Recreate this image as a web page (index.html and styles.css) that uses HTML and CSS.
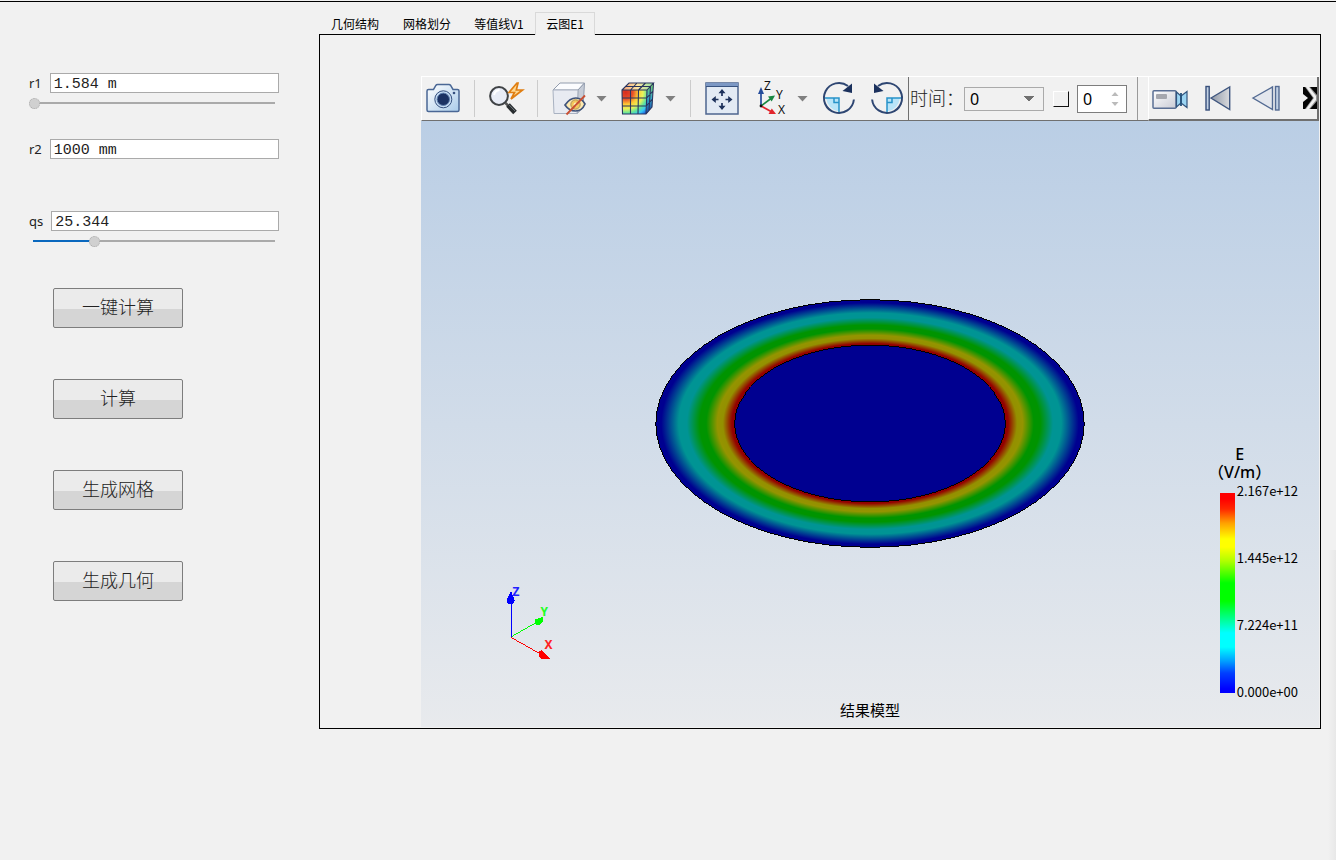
FILE: index.html
```html
<!DOCTYPE html>
<html lang="zh-CN">
<head>
<meta charset="utf-8">
<title>结果模型</title>
<link rel="stylesheet" href="styles.css">
</head>
<body>
<main class="app">
  <section class="params">
    <div class="fields">
      <div class="field">
        <div class="field-row"><label for="r1">r1</label><input class="text-box" id="r1" type="text" value="1.584 m"></div>
        <input class="slider" type="range" min="0" max="100" value="0" aria-label="r1">
      </div>
      <div class="field">
        <div class="field-row"><label for="r2">r2</label><input class="text-box" id="r2" type="text" value="1000 mm"></div>
      </div>
      <div class="field">
        <div class="field-row"><label for="qs">qs</label><input class="text-box" id="qs" type="text" value="25.344"></div>
        <input class="slider slider-filled" type="range" min="0" max="100" value="25" aria-label="qs">
      </div>
    </div>
    <div class="actions">
      <button class="push" type="button">一键计算</button>
      <button class="push" type="button">计算</button>
      <button class="push" type="button">生成网格</button>
      <button class="push" type="button">生成几何</button>
    </div>
  </section>

  <section class="results">
    <div class="tabs" role="tablist">
      <button class="tab" type="button" role="tab">几何结构</button>
      <button class="tab" type="button" role="tab">网格划分</button>
      <button class="tab" type="button" role="tab">等值线V1</button>
      <button class="tab tab-active" type="button" role="tab" aria-selected="true">云图E1</button>
    </div>
    <div class="panel">
      <div class="viewer">
        <div class="toolbars">
          <div class="bar bar-view">
            <button class="tool" type="button" aria-label="截图">
              <svg class="icon" viewBox="0 0 34 34">
                <defs><linearGradient id="cam" x2="1" y2="1"><stop offset="0" stop-color="#fff"/><stop offset="1" stop-color="#a9cbea"/></linearGradient></defs>
                <path d="M2.5 7.5H7.5L10 3.2Q10.5 2.5 11.5 2.5H23Q24 2.5 24.5 3.2L27 7.5H31.5Q33 7.5 33 9V28Q33 29.5 31.5 29.5H2.5Q1 29.5 1 28V9Q1 7.5 2.5 7.5Z" fill="url(#cam)" stroke="#4a6795" stroke-width="1.5"/>
                <circle cx="17.3" cy="17.3" r="8.5" fill="#c5dcf3" stroke="#35507f" stroke-width="1"/>
                <circle cx="17.3" cy="17.3" r="6.2" fill="#1b3263" stroke="#5f7fae" stroke-width="1"/>
                <circle cx="28" cy="11" r="1.3" fill="#35507f"/>
              </svg>
            </button>
            <span class="sep"></span>
            <button class="tool" type="button" aria-label="快速缩放">
              <svg class="icon" viewBox="0 0 34 34">
                <path d="M16.5 21L19 23.5" stroke="#555" stroke-width="2.5"/>
                <path d="M19 23L26 30.500" stroke="#292d30" stroke-width="5"/>
                <path d="M20.2 23L26 29" stroke="#71797f" stroke-width="1"/>
                <circle cx="10" cy="14" r="8.9" fill="#e8ecf6" stroke="#3f4245" stroke-width="2"/>
                <path d="M5 13Q6 8.5 10.5 8" fill="none" stroke="#fff" stroke-width="2"/>
                <path d="M28 1L20 10.5L25.5 10.5L22 17L33.5 8H27.3L29 1Z" fill="#ffd890" stroke="#e07e12" stroke-width="1.7"/>
              </svg>
            </button>
            <span class="sep"></span>
            <button class="tool" type="button" aria-label="隐藏">
              <svg class="icon" viewBox="0 0 34 34">
                <path d="M1 8L8 1H32.5L26 8Z" fill="#fbfcfe" stroke="#929cad"/>
                <path d="M26 8L32.5 1L31 26L25 31.5Z" fill="#c6ccd7" stroke="#929cad"/>
                <path d="M1 8H26L25 31.5H2Z" fill="#e8ebf2" stroke="#a9b2c1"/>
                <path d="M13 23Q18 15.8 24 16T33 22Q30 29 23.5 29T13 23Z" fill="#ffeab0" stroke="#40547c" stroke-width="1.7"/>
                <circle cx="23.5" cy="22.5" r="4.7" fill="#f3c75b" stroke="#a9905b"/>
                <circle cx="23.5" cy="22.5" r="1.9" fill="#fff0be"/>
                <path d="M14.5 32.5L33 13.5" stroke="#c94f32" stroke-width="1.8"/>
              </svg>
            </button>
            <button class="drop" type="button" aria-label="隐藏选项"></button>
            <button class="tool" type="button" aria-label="云图显示">
              <svg class="icon" viewBox="0 0 34 34">
                <defs>
                  <radialGradient id="heat" cx="0.15" cy="0.1" r="1.15"><stop offset="0" stop-color="#d92b20"/><stop offset="0.25" stop-color="#e8502a"/><stop offset="0.43" stop-color="#ffc934"/><stop offset="0.6" stop-color="#e9f35b"/><stop offset="0.75" stop-color="#61e39c"/><stop offset="0.88" stop-color="#36c9f6"/><stop offset="1" stop-color="#2169e0"/></radialGradient>
                  <linearGradient id="heatTop" x2="1"><stop offset="0" stop-color="#f4a078"/><stop offset="0.5" stop-color="#ffe6a0"/><stop offset="1" stop-color="#8de0a0"/></linearGradient>
                  <linearGradient id="heatSide" x2="0" y2="1"><stop offset="0" stop-color="#7fd968"/><stop offset="0.5" stop-color="#35a5c7"/><stop offset="1" stop-color="#173da3"/></linearGradient>
                </defs>
                <path d="M1 8L8 1H32.5L26 8Z" fill="url(#heatTop)"/>
                <path d="M26 8L32.5 1L31 25L25 32Z" fill="url(#heatSide)"/>
                <path d="M1 8H26L25 32H1.5Z" fill="url(#heat)"/>
                <path d="M1 8L8 1H32.5L26 8H1L1.5 32H25L31 25L32.5 1M26 8L25 32M9.5 8V32M17.5 8L17 32M1 16H25.7L32 9M1.5 24H25.3L31.5 17M9.5 8L16 1M17.5 8L24.5 1M4.5 4.5H29.5L28 28.5" fill="none" stroke="#29345e" stroke-width="1.1"/>
              </svg>
            </button>
            <button class="drop" type="button" aria-label="云图选项"></button>
            <span class="sep"></span>
            <button class="tool" type="button" aria-label="适应窗口">
              <svg class="icon" viewBox="0 0 34 34">
                <rect x="1" y="1" width="32" height="31" fill="#e2eaf4" stroke="#4e658f" stroke-width="1.5"/>
                <path d="M1 2.5H33" stroke="#7c98c4" stroke-width="3"/><path d="M1 4.5H33" stroke="#385380"/>
                <path d="M17 14V10M17 21V25M13.5 17.5H9.5M20.5 17.5H24.5" stroke="#1d315b" stroke-width="1.7"/>
                <path d="M17 7L20.5 11.3H13.5ZM17 28L20.5 23.7H13.5ZM6.5 17.5L10.8 14V21ZM27.5 17.5L23.2 14V21Z" fill="#1d315b"/>
              </svg>
            </button>
            <button class="tool" type="button" aria-label="视角">
              <svg class="icon" viewBox="0 0 34 34">
                <path d="M8 24V9" stroke="#244b9b" stroke-width="1.7"/><path d="M8 5L11 12H5Z" fill="#244b9b"/>
                <path d="M8 24L18 16.5" stroke="#188740" stroke-width="1.7"/><path d="M22 13.5L18.7 19.5L15 14.5Z" fill="#188740"/>
                <path d="M8 24L18 29.5" stroke="#e2252c" stroke-width="1.7"/><path d="M23 32H15.5L18.8 26.5Z" fill="#e2252c"/>
                <circle cx="8" cy="24" r="1.4" fill="#111"/>
                <text class="axis-letter" x="11" y="8">Z</text><text class="axis-letter" x="23" y="17">Y</text><text class="axis-letter" x="25" y="32">X</text>
              </svg>
            </button>
            <button class="drop" type="button" aria-label="视角选项"></button>
            <button class="tool" type="button" aria-label="顺时针旋转">
              <svg class="icon" viewBox="0 0 34 34">
                <path d="M4 16H17V29.5Q6 28 4 16Z" fill="#b9e4f8"/><path d="M2 16H17V31" fill="none" stroke="#2793c9" stroke-width="1.5"/><path d="M12 16V20.5H17" fill="none" stroke="#2793c9" stroke-width="1.5"/>
                <path d="M31.9 17.5A15 15 0 1 1 26 4" fill="none" stroke="#2e4672" stroke-width="2"/>
                <path d="M30 1.5V11L20.500 9Z" fill="#1b315d"/>
              </svg>
            </button>
            <button class="tool" type="button" aria-label="逆时针旋转">
              <svg class="icon" viewBox="0 0 34 34">
                <path d="M30 16H17V29.5Q28 28 30 16Z" fill="#b9e4f8"/><path d="M32 16H17V31" fill="none" stroke="#2793c9" stroke-width="1.5"/><path d="M22 16V20.5H17" fill="none" stroke="#2793c9" stroke-width="1.5"/>
                <path d="M2.1 17.5A15 15 0 1 0 8 4" fill="none" stroke="#2e4672" stroke-width="2"/>
                <path d="M4 1.5V11L13.500 9Z" fill="#1b315d"/>
              </svg>
            </button>
          </div>
          <div class="bar bar-time">
            <label class="time-label" for="time">时间：</label>
            <select class="time-select" id="time"><option>0</option></select>
            <input class="tick" type="checkbox" aria-label="启用帧">
            <div class="spin">
              <input class="spin-box" type="number" value="0" aria-label="帧">
              <svg class="spin-arrows" viewBox="0 0 8 16"><path d="M4 1L7.5 5H0.5ZM4 15L7.5 11H0.5Z" fill="#bbb"/></svg>
            </div>
          </div>
          <div class="bar bar-play">
            <button class="tool" type="button" aria-label="录像">
              <svg class="icon icon-wide" viewBox="0 0 36 34">
                <defs><linearGradient id="vid" x2="1" y2="1"><stop offset="0" stop-color="#fff"/><stop offset="1" stop-color="#c9cbd5"/></linearGradient></defs>
                <rect x="1" y="9.7" width="23" height="17.5" rx="1" fill="url(#vid)" stroke="#5a6f94" stroke-width="1.5"/>
                <rect x="4" y="13" width="11" height="5" rx="1" fill="#a5a7ae"/>
                <path d="M24.5 11L29 15V22L24.5 26ZM35 10.5L29 15V22L35 26.5Z" fill="#9cd5f3" stroke="#32547d" stroke-width="1.2"/>
                <path d="M29 12V25" stroke="#24517b" stroke-width="1.8"/>
              </svg>
            </button>
            <button class="tool" type="button" aria-label="第一帧">
              <svg class="icon" viewBox="0 0 34 34">
                <defs><linearGradient id="tri" x2="1"><stop offset="0" stop-color="#8f98a7"/><stop offset="1" stop-color="#d9dadd"/></linearGradient></defs>
                <rect x="5" y="5.5" width="3.2" height="23.5" fill="#c2d1e4" stroke="#374f7b" stroke-width="1.4"/>
                <path d="M10 17L28.7 6V28.5Z" fill="url(#tri)" stroke="#3f567f" stroke-width="1.4"/>
              </svg>
            </button>
            <button class="tool" type="button" aria-label="上一帧">
              <svg class="icon" viewBox="0 0 34 34">
                <path d="M5 17L24.5 6V28.5Z" fill="#e4e7ed" stroke="#536a92" stroke-width="1.4"/>
                <rect x="27.5" y="5.5" width="3.5" height="23.5" fill="#c2d1e4" stroke="#536a92" stroke-width="1.4"/>
              </svg>
            </button>
            <button class="tool tool-more" type="button" aria-label="更多">
              <svg class="icon icon-more" viewBox="0 0 14 22">
                <path d="M0 0H14V22H0Z" fill="#050505"/>
                <path d="M2 0H7L14 8V14L7 22H2L10 11Z" fill="#999"/>
                <path d="M0 7L5 11L0 15ZM3 0H6L13 9V13L6 22H3L11 11Z" fill="#f1f1f1"/>
              </svg>
            </button>
          </div>
        </div>

        <div class="scene">
          <svg class="plot" viewBox="0 0 898 607" role="img" aria-label="电场云图">
            <defs>
              <radialGradient id="field">
                <stop offset="0.632" stop-color="#900000"/><stop offset="0.645" stop-color="#940000"/>
                <stop offset="0.687" stop-color="#949000"/><stop offset="0.713" stop-color="#949400"/>
                <stop offset="0.765" stop-color="#009400"/><stop offset="0.795" stop-color="#009400"/>
                <stop offset="0.855" stop-color="#009494"/><stop offset="0.893" stop-color="#009494"/>
                <stop offset="0.975" stop-color="#000090"/><stop offset="1" stop-color="#000090"/>
              </radialGradient>
            </defs>
            <g shape-rendering="crispEdges" stroke="#000">
              <ellipse cx="449" cy="303" rx="214.5" ry="124" fill="url(#field)"/>
              <ellipse cx="449" cy="303" rx="135.5" ry="78.5" fill="#000090"/>
            </g>
            <g shape-rendering="crispEdges">
              <path d="M89 517L121 535" stroke="#f00"/><path d="M89 517L117 501" stroke="#0f0"/><rect x="89" y="481" width="1" height="36" fill="#00f"/>
              <path d="M88.5 472H90L93 480Q93 484 89 484T85 480Z" fill="#00f"/>
              <path d="M114 499L121 497V502L118 505H115L113 502Z" fill="#0f0"/>
              <path d="M120 530L129 539H120L117 536V532Z" fill="#f00"/>
            </g>
            <g class="triad"><text x="91" y="476" fill="#22f">Z</text><text x="119" y="496" fill="#2f2">Y</text><text x="123" y="529" fill="#f22">X</text></g>
          </svg>
          <div class="legend">
            <div class="legend-title"><span>E</span><span>（V/m）</span></div>
            <div class="legend-body">
              <div class="legend-scale"></div>
              <div class="legend-values"><span>2.167e+12</span><span>1.445e+12</span><span>7.224e+11</span><span>0.000e+00</span></div>
            </div>
          </div>
          <p class="caption">结果模型</p>
        </div>
      </div>
    </div>
  </section>
</main>
</body>
</html>
```

FILE: styles.css
```css
* { box-sizing: border-box; }

html { background: #f1f1f1; }

body {
  margin: 0;
  padding-top: 1px;
  color: #222;
  font-family: "Noto Sans", "Noto Sans CJK SC", sans-serif;
}

button, input, select { font: inherit; color: inherit; margin: 0; }

.app {
  display: flex;
  min-height: calc(100vh - 1px);
  padding: 0 15px 131px 0;
  border-top: 1px solid #000;
  background: linear-gradient(to right, #f1f1f1, #e8e8e8) right bottom / 8px 310px no-repeat;
}

/* Parameters */
.params { flex: 0 0 319px; padding: 71px 40px 0 29px; }

.fields { display: grid; grid-template-rows: 66px 72px 77px; }

.field-row {
  display: flex;
  align-items: center;
  gap: 8px;
  height: 20px;
  font-size: 13px;
}

.text-box {
  flex: 1;
  min-width: 0;
  height: 20px;
  padding: 3px 3px 0;
  border: 1px solid #aaa;
  background: #fff;
  font: 15px/15px "Liberation Mono", monospace;
}

.slider {
  appearance: none;
  display: block;
  width: 100%;
  height: 20px;
  background: linear-gradient(#aaa, #aaa) center / calc(100% - 8px) 2px no-repeat;
}

.slider-filled {
  background:
    linear-gradient(#0a68be, #0a68be) 4px center / 25% 2px no-repeat,
    linear-gradient(#aaa, #aaa) center / calc(100% - 8px) 2px no-repeat;
}

.slider::-webkit-slider-thumb {
  appearance: none;
  width: 11px;
  height: 11px;
  border: 1px dotted #aaa;
  border-radius: 50%;
  background: #d0d0d0;
}

.actions {
  display: flex;
  flex-direction: column;
  gap: 51px;
  padding-left: 24px;
}

.push {
  width: 130px;
  height: 40px;
  padding: 0 0 4px;
  border: 1px solid #7d7d7d;
  border-radius: 2px;
  background: linear-gradient(#ebebeb 0 52%, #d5d5d5 52%);
  font: 300 18px/34px "Noto Sans CJK SC", sans-serif;
}

/* Tabs */
.results {
  flex: 1;
  min-width: 0;
  display: flex;
  flex-direction: column;
  padding-top: 10px;
}

.tabs { display: flex; }

.tab {
  width: 72px;
  height: 23px;
  margin-bottom: -1px;
  padding: 0;
  border: 0;
  background: none;
  color: #000;
  font: 12px/22px "Noto Sans CJK SC", sans-serif;
}

.tab-active {
  position: relative;
  width: 60px;
  border: 1px solid #d9d9d9;
  border-bottom: 0;
  background: #f1f1f1;
}

.panel {
  flex: 1;
  display: flex;
  padding: 41px 1px 1px 101px;
  border: 1px solid #000;
}

.viewer { flex: 1; min-width: 0; display: flex; flex-direction: column; }

/* Toolbars */
.toolbars {
  display: flex;
  height: 45px;
  border-top: 1px solid #fff;
  border-bottom: 1px solid #707070;
  border-left: 1px solid #fff;
}

.bar { display: flex; align-items: center; }

.bar-view { gap: 14px; padding: 0 4px; }

.tool {
  flex: none;
  display: block;
  padding: 0;
  border: 0;
  background: none;
}

.icon { display: block; width: 34px; height: 34px; overflow: visible; }
.icon-wide { width: 36px; }
.icon-more { width: 14px; height: 22px; }

.axis-letter { font: 12px "Noto Sans", sans-serif; fill: #111; }

.sep { flex: none; width: 1px; height: 37px; background: #ccc; }

.drop {
  flex: none;
  width: 11px;
  height: 6px;
  margin-left: -4px;
  padding: 0;
  border: 0;
  background: #808080;
  clip-path: polygon(0 0, 100% 0, 50% 100%);
}

.bar-time {
  padding-right: 10px;
  border-left: 1px solid #707070;
  border-right: 1px solid #999;
}

.time-label {
  padding: 0 0 3px 1px;
  width: 55px;
  font: 300 18px/24px "Noto Sans CJK SC", sans-serif;
  white-space: nowrap;
}

.time-select {
  appearance: none;
  width: 80px;
  height: 24px;
  padding: 0 5px;
  border: 1px solid #aaa;
  border-radius: 0;
  background: conic-gradient(from 315deg at 50% 100%, #707070 90deg, transparent 90deg) right 9px center / 10px 5px no-repeat;
  font-size: 16px;
  line-height: 22px;
  color: #000;
}

.tick {
  appearance: none;
  width: 16px;
  height: 16px;
  margin: 0 8px 0 9px;
  border: 1px solid #fff;
  border-right: 1px solid #111;
  border-bottom: 1px solid #111;
}

.spin { position: relative; width: 50px; height: 28px; }

.spin-box {
  appearance: textfield;
  width: 100%;
  height: 100%;
  padding: 0 5px;
  border: 1px solid #7d7d7d;
  background: #fff;
  font-size: 16px;
  color: #000;
}

.spin-box::-webkit-inner-spin-button { appearance: none; }

.spin-arrows { position: absolute; right: 8px; top: 6px; width: 8px; height: 16px; }

.bar-play {
  flex: 1;
  gap: 13px;
  margin: 0 0 -1px 10px;
  padding-left: 3px;
  border-left: 1px solid #fff;
  border-right: 2px solid #707070;
  border-bottom: 2px solid #707070;
}

.tool-more { margin-left: auto; }

/* Result scene */
.scene {
  flex: 1;
  position: relative;
  min-height: 480px;
  background: linear-gradient(#bacee5, #e8eaed);
}

.plot { position: absolute; inset: 0; width: 100%; height: 100%; }

.triad { font: bold 12px "Noto Sans", sans-serif; }

.legend {
  position: absolute;
  right: 21px;
  bottom: 28px;
  color: #000;
}

.legend-title {
  display: flex;
  flex-direction: column;
  align-items: center;
  gap: 2px;
  width: 64px;
  margin-left: -12px;
  padding-bottom: 4px;
  font: 500 16px/16px "Noto Sans", "Noto Sans CJK SC", sans-serif;
  text-spacing-trim: space-all;
  white-space: nowrap;
}

.legend-body { display: flex; gap: 2px; height: 215px; }

.legend-scale {
  width: 15px;
  height: 200px;
  margin-top: 9px;
  background: linear-gradient(#f00 3%, #ff2800 8%, #ffa000 15%, #ff0 23%, #ff0 27%, #b0ff00 34%, #0f0 45%, #0f0 54%, #00ff90 63%, #0ff 70%, #0ff 77%, #00a0ff 84%, #0040ff 90%, #00f 98%);
}

.legend-values {
  display: flex;
  flex-direction: column;
  justify-content: space-between;
  font: 13px/14px "Noto Sans CJK SC", sans-serif;
}

.caption {
  position: absolute;
  inset: auto 0 6px 0;
  margin: 0;
  text-align: center;
  font: 15px/22px "Noto Sans CJK SC", sans-serif;
  color: #000;
}
```
